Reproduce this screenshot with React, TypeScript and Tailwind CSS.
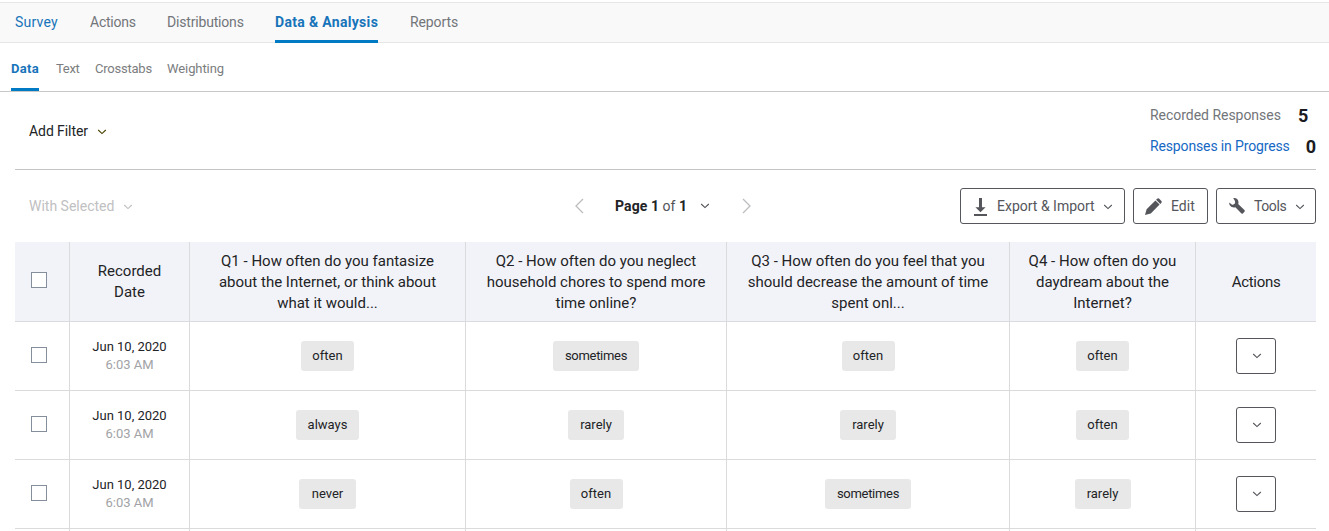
const rows = [
  ["often", "sometimes", "often", "often"],
  ["always", "rarely", "rarely", "often"],
  ["never", "often", "sometimes", "rarely"],
];

const tagWidths: Record<string, string> = {
  often: "w-[53px]",
  sometimes: "w-[86px] tracking-[-0.3px]",
  always: "w-[63px]",
  rarely: "w-[56px]",
  never: "w-[57px]",
};

const questions = [
  ["Q1 - How often do you fantasize", "about the Internet, or think about", "what it would..."],
  ["Q2 - How often do you neglect", "household chores to spend more", "time online?"],
  ["Q3 - How often do you feel that you", "should decrease the amount of time", "spent onl..."],
  ["Q4 - How often do you", "daydream about the", "Internet?"],
];

const columns = "grid grid-cols-[55px_120px_276px_261px_283px_186px_120px]";
const cell = "flex items-center justify-center border-r border-b border-[#dadbdd]";

function Chevron({ className = "" }: { className?: string }) {
  return (
    <svg className={`h-[6px] w-[10px] shrink-0 ${className}`} viewBox="0 0 10 6" fill="none" stroke="currentColor" strokeWidth="1.1">
      <path d="M1.2 1 5 4.6 8.8 1" />
    </svg>
  );
}

function Arrow({ d }: { d: string }) {
  return (
    <svg className="h-4 w-[10px] shrink-0 text-[#bcbdbf]" viewBox="0 0 10 16" fill="none" stroke="currentColor" strokeWidth="1.3">
      <path d={d} />
    </svg>
  );
}

function DownloadIcon() {
  return (
    <svg className="mt-px h-[18px] w-[13px] shrink-0" viewBox="0 0 13 18" fill="currentColor">
      <path d="M5 0h3v9.2h3.6L6.5 14.3 1.4 9.2H5zM0 16h13v2H0z" />
    </svg>
  );
}

function PencilIcon() {
  return (
    <svg className="h-[17px] w-[17px] shrink-0" viewBox="0 0 17 17" fill="currentColor">
      <path d="M0 17 1.6 11.2 10.4 2.4 14.6 6.6 5.8 15.4zM11.1 1.7 12.1.7Q13.1-.2 14 .6L16.4 3Q17.2 3.9 16.3 4.9L15.3 5.9z" />
    </svg>
  );
}

function WrenchIcon() {
  return (
    <svg className="h-4 w-4 shrink-0" viewBox="0 0 16 16" fill="currentColor">
      <path d="M4.3.2C6.8-.3 9.6 1.4 9.5 4.5Q9.5 5.3 9.2 6L15.4 12.1Q16.2 13 15.4 13.8L13.9 15.4Q13 16 12.2 15.2L6.4 9.3C3.1 10.4-.1 7.9.2 4.4L3.1 6.7Q5.1 6.9 5.8 5.6 6.4 4.2 5.8 2.7z" />
    </svg>
  );
}

function Checkbox() {
  return <span className="size-4 border border-[#858e9b] bg-white" />;
}

export default function App() {
  return (
    <div className="h-[531px] w-[1329px] overflow-hidden bg-white font-['Roboto',sans-serif] text-[14px] text-[#222326]">
      <nav className="mt-[2px] flex h-[41px] border-y border-[#e6e6e7] bg-[#f9f9f9] pl-[15px] text-[#727579]">
        <span className="w-[74px] pt-[9px] leading-5 tracking-[0.2px] text-[#1774ba]">Survey</span>
        <span className="w-[77px] pt-[9px] pl-px leading-5 tracking-[-0.25px]">Actions</span>
        <span className="w-[109px] pt-[9px] pl-px leading-5 tracking-[-0.18px]">Distributions</span>
        <span className="-mb-px w-[103px] border-b-[3px] border-[#007ac3] pt-[9px] leading-5 font-bold tracking-[0.32px] whitespace-nowrap text-[#1774ba]">Data &amp; Analysis</span>
        <span className="ml-8 pt-[9px] leading-5 tracking-[-0.1px]">Reports</span>
      </nav>

      <nav className="flex h-[49px] border-b border-[#c8c8c9] pl-[11px] text-[13px] text-[#7b7d80]">
        <span className="w-7 border-b-[3px] border-[#007ac3] pt-4 leading-5 font-bold tracking-[0.3px] text-[#1774ba]">Data</span>
        <span className="ml-[17px] w-[23px] pt-4 leading-5 tracking-[-0.3px]">Text</span>
        <span className="ml-4 w-[57px] pt-4 leading-5 tracking-[-0.22px]">Crosstabs</span>
        <span className="ml-[15px] pt-4 leading-5 tracking-[-0.08px]">Weighting</span>
      </nav>

      <main className="pr-[13px] pl-[15px]">
        <section className="flex h-[78px] justify-between border-b border-[#c3c4c6]">
          <div className="flex h-[78px] items-center gap-[9px] pl-[14px]">
            <span className="tracking-[-0.07px]">Add Filter</span>
            <Chevron className="mt-[2px] text-[#4a4300]" />
          </div>
          <div className="w-[166px] pt-2">
            <div className="flex h-[31px] items-center text-[#727579]">
              <span className="w-[148px] tracking-[-0.03px]">Recorded Responses</span>
              <b className="-mt-px text-[18px] text-[#1b1c1f]">5</b>
            </div>
            <div className="flex h-[31px] items-center text-[#1568c4]">
              <span className="w-[156px] tracking-[-0.14px]">Responses in Progress</span>
              <b className="text-[18px] text-[#1b1c1f]">0</b>
            </div>
          </div>
        </section>

        <section className="flex h-[72px] items-center">
          <div className="flex w-[559px] items-center gap-[9px] pl-[14px] text-[#bfc0c2]">
            <span>With Selected</span>
            <Chevron className="mt-[2px]" />
          </div>
          <Arrow d="M9 1 2 8l7 7" />
          <div className="ml-[31px] flex w-[95px] items-center justify-between">
            <span className="whitespace-nowrap">
              <b className="tracking-[0.1px]">Page 1</b> <span className="text-[#505256]">of</span> <b>1</b>
            </span>
            <Chevron className="text-[#505256]" />
          </div>
          <div className="ml-8">
            <Arrow d="M1 1l7 7-7 7" />
          </div>
          <div className="ml-auto flex gap-2 text-[#54565b]">
            <button className="flex h-9 w-[165px] items-center rounded-[3px] border border-current pl-[13px]">
              <DownloadIcon />
              <span className="ml-[10px] w-[106px] text-left">Export &amp; Import</span>
              <Chevron className="mt-[2px]" />
            </button>
            <button className="flex h-9 w-[75px] items-center gap-[9px] rounded-[3px] border border-current pl-[11px]">
              <PencilIcon />
              <span>Edit</span>
            </button>
            <button className="flex h-9 w-[100px] items-center rounded-[3px] border border-current pl-[12px]">
              <WrenchIcon />
              <span className="ml-[9px] w-[41px] text-left tracking-[-0.4px]">Tools</span>
              <Chevron className="mt-[2px]" />
            </button>
          </div>
        </section>

        <section>
          <div className={`${columns} h-20 bg-[#f2f3f8] text-center text-[15px] leading-[21px]`}>
            <div className={`${cell} pr-[6px] pb-1`}>
              <Checkbox />
            </div>
            <div className={cell}>
              <span>Recorded<br />Date</span>
            </div>
            {questions.map((lines) => (
              <div key={lines[0]} className={`${cell} pt-[2px]`}>
                <span className="whitespace-nowrap">
                  {lines.map((line) => (
                    <span key={line} className="block">{line}</span>
                  ))}
                </span>
              </div>
            ))}
            <div className="flex items-center justify-center border-b border-[#dadbdd] pt-[2px] tracking-[-0.3px]">Actions</div>
          </div>
          {rows.map((answers, i) => (
            <div key={i} className={`${columns} h-[69px] text-[13px]`}>
              <div className={`${cell} pr-[6px] pb-[2px]`}>
                <Checkbox />
              </div>
              <div className={`${cell} flex-col leading-[18px]`}>
                <span>Jun 10, 2020</span>
                <span className="text-[#a1a3a6]">6:03 AM</span>
              </div>
              {answers.map((answer, j) => (
                <div key={j} className={cell}>
                  <span className={`-mt-px rounded-[3px] bg-[#e8e8e8] py-[6px] text-center leading-[18px] ${tagWidths[answer]}`}>{answer}</span>
                </div>
              ))}
              <div className="flex items-center justify-center border-b border-[#dadbdd]">
                <button className="-mt-px flex h-9 w-10 items-center justify-center rounded-[3px] border border-[#54565b] text-[#54565b]">
                  <Chevron className="mt-px ml-px" />
                </button>
              </div>
            </div>
          ))}
          <div className={`${columns} h-[2px]`}>
            {[0, 1, 2, 3, 4, 5].map((i) => (
              <div key={i} className="border-r border-[#dadbdd]" />
            ))}
          </div>
        </section>
      </main>
    </div>
  );
}
